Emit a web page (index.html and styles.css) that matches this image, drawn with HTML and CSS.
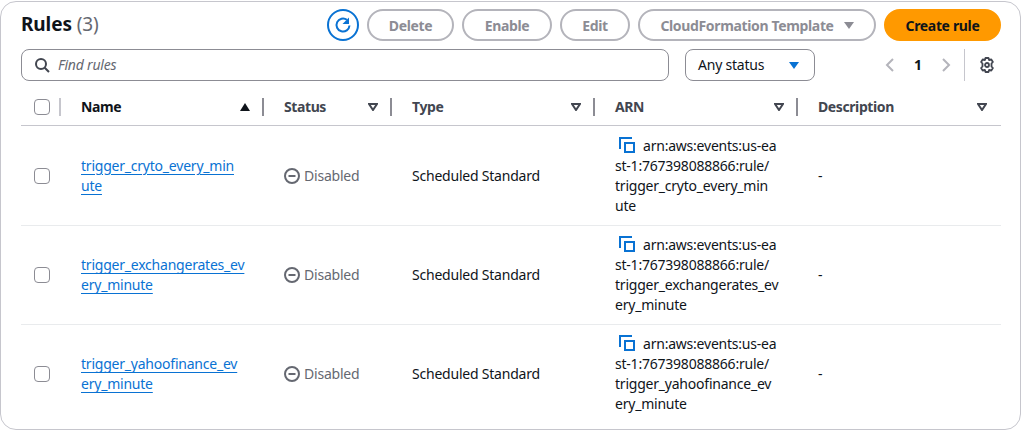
FILE: index.html
```html
<!DOCTYPE html>
<html lang="en">

<head>
    <meta charset="UTF-8">
    <title>Rules</title>
    <link rel="stylesheet" href="styles.css">
</head>

<body>
    <div class="card">

        <!-- title and actions -->
        <div class="top">
            <h2 class="title">Rules <span class="count">(3)</span></h2>
            <div class="actions">
                <button class="refresh">
                    <svg width="18" height="18" viewBox="0 0 18 18" fill="none" stroke="#0972d3" stroke-width="2">
                        <path d="M15.500 9.500a6.500 6.500 0 1 1-2.600-5.700"/>
                        <path d="M15 1.500v6.500h-6.500z" fill="#0972d3" stroke="none"/>
                    </svg>
                </button>
                <button class="btn w-delete">Delete</button>
                <button class="btn w-enable">Enable</button>
                <button class="btn w-edit">Edit</button>
                <button class="btn w-cf">CloudFormation Template <span class="caret-gray"></span></button>
                <button class="btn primary">Create rule</button>
            </div>
        </div>

        <!-- filters -->
        <div class="filters">
            <div class="search">
                <svg width="16" height="16" viewBox="0 0 16 16" fill="none" stroke="#424650" stroke-width="2">
                    <circle cx="7" cy="7" r="5"/>
                    <path d="M10.700 10.700l4.300 4.300"/>
                </svg>
                <span class="placeholder">Find rules</span>
            </div>
            <div class="select">
                <span>Any status</span>
                <span class="caret-blue"></span>
            </div>
            <div class="pager">
                <svg width="16" height="16" viewBox="0 0 16 16" fill="none" stroke="#b4b4bb" stroke-width="2"><path d="M11 2L5 8l6 6"/></svg>
                <span class="page">1</span>
                <svg width="16" height="16" viewBox="0 0 16 16" fill="none" stroke="#b4b4bb" stroke-width="2"><path d="M5 2l6 6-6 6"/></svg>
            </div>
            <div class="settings">
                <svg width="16" height="16" viewBox="0 0 16 16" fill="none" stroke="#424650" stroke-width="1.800" stroke-linejoin="round">
                    <circle cx="8" cy="8" r="2"/>
                    <path d="M6.500 1h3l.6 2 2.200-.5L13.900 5l-1.400 1.500v3L13.900 11l-1.600 2.500-2.200-.5-.6 2h-3l-.6-2-2.200.5L2.100 11l1.400-1.500v-3L2.100 5l1.600-2.500 2.200.5z"/>
                </svg>
            </div>
        </div>

        <!-- table -->
        <div class="row head">
            <div class="cell check"><span class="box"></span><i class="sep"></i></div>
            <div class="cell name-head">Name <svg class="sort" width="10" height="8" viewBox="0 0 10 8"><path d="M5 0l5 8H0z" fill="#0f141a"/></svg><i class="sep"></i></div>
            <div class="cell">Status <svg class="sort" width="10" height="8" viewBox="0 0 10 8"><path d="M1 1h8L5 7z" fill="white" stroke="#424650" stroke-width="2"/></svg><i class="sep"></i></div>
            <div class="cell">Type <svg class="sort" width="10" height="8" viewBox="0 0 10 8"><path d="M1 1h8L5 7z" fill="white" stroke="#424650" stroke-width="2"/></svg><i class="sep"></i></div>
            <div class="cell">ARN <svg class="sort" width="10" height="8" viewBox="0 0 10 8"><path d="M1 1h8L5 7z" fill="white" stroke="#424650" stroke-width="2"/></svg><i class="sep"></i></div>
            <div class="cell">Description <svg class="sort" width="10" height="8" viewBox="0 0 10 8"><path d="M1 1h8L5 7z" fill="white" stroke="#424650" stroke-width="2"/></svg></div>
        </div>

        <div class="row first">
            <div class="cell check"><span class="box"></span></div>
            <div class="cell"><a class="link" href="#">trigger_cryto_every_min<br>ute</a></div>
            <div class="cell"><span class="status"><svg class="minus" width="16" height="16" viewBox="0 0 16 16" fill="none" stroke="#656871" stroke-width="2"><circle cx="8" cy="8" r="7"/><path d="M4.500 8h7"/></svg>Disabled</span></div>
            <div class="cell">Scheduled Standard</div>
            <div class="cell arn">
                <div><svg class="copy" width="16" height="16" viewBox="0 0 16 16" fill="none" stroke="#0972d3" stroke-width="2"><path d="M1 12V1h12"/><rect x="6" y="6" width="9" height="9"/></svg>arn:aws:events:us-ea<br>st-1:767398088866:rule/<br>trigger_cryto_every_min<br>ute</div>
            </div>
            <div class="cell">-</div>
        </div>

        <div class="row">
            <div class="cell check"><span class="box"></span></div>
            <div class="cell"><a class="link" href="#">trigger_exchangerates_ev<br>ery_minute</a></div>
            <div class="cell"><span class="status"><svg class="minus" width="16" height="16" viewBox="0 0 16 16" fill="none" stroke="#656871" stroke-width="2"><circle cx="8" cy="8" r="7"/><path d="M4.500 8h7"/></svg>Disabled</span></div>
            <div class="cell">Scheduled Standard</div>
            <div class="cell arn">
                <div><svg class="copy" width="16" height="16" viewBox="0 0 16 16" fill="none" stroke="#0972d3" stroke-width="2"><path d="M1 12V1h12"/><rect x="6" y="6" width="9" height="9"/></svg>arn:aws:events:us-ea<br>st-1:767398088866:rule/<br>trigger_exchangerates_ev<br>ery_minute</div>
            </div>
            <div class="cell">-</div>
        </div>

        <div class="row last">
            <div class="cell check"><span class="box"></span></div>
            <div class="cell"><a class="link" href="#">trigger_yahoofinance_ev<br>ery_minute</a></div>
            <div class="cell"><span class="status"><svg class="minus" width="16" height="16" viewBox="0 0 16 16" fill="none" stroke="#656871" stroke-width="2"><circle cx="8" cy="8" r="7"/><path d="M4.500 8h7"/></svg>Disabled</span></div>
            <div class="cell">Scheduled Standard</div>
            <div class="cell arn">
                <div><svg class="copy" width="16" height="16" viewBox="0 0 16 16" fill="none" stroke="#0972d3" stroke-width="2"><path d="M1 12V1h12"/><rect x="6" y="6" width="9" height="9"/></svg>arn:aws:events:us-ea<br>st-1:767398088866:rule/<br>trigger_yahoofinance_ev<br>ery_minute</div>
            </div>
            <div class="cell">-</div>
        </div>

    </div>
</body>

</html>
```

FILE: styles.css
```css
* {
    box-sizing: border-box;
}

body {
    margin: 0;
    padding-top: 1px;
    background-color: #ffffff;
    color: #0f141a;
    font-family: "Noto Sans", sans-serif;
    font-size: 14px;
    line-height: 20px;
    letter-spacing: -0.22px;
}

.card {
    width: 1021px;
    height: 429px;
    padding: 7px 19px 0 20px;
    border: 1px solid #c6c6cd;
    border-radius: 16px;
    background-color: white;
}

/* title and actions */
.top {
    display: flex;
    justify-content: space-between;
    align-items: center;
    height: 32px;
}

.title {
    margin: 0;
    font-size: 19px;
    line-height: 32px;
    font-weight: 700;
    letter-spacing: -0.1px;
    position: relative;
    top: -1px;
}

.count {
    color: #656871;
    font-weight: 400;
}

.actions {
    display: flex;
    gap: 8px;
}

button {
    font-family: inherit;
    font-size: 14px;
    font-weight: 700;
    letter-spacing: -0.35px;
    height: 32px;
    padding: 0;
    background-color: white;
    border: 2px solid #b4b4bb;
    border-radius: 16px;
    color: #8c8c94;
    display: flex;
    align-items: center;
    justify-content: center;
    gap: 10px;
}

.refresh {
    width: 32px;
    border-color: #0972d3;
}

.w-delete { width: 87px; }
.w-enable { width: 90px; }
.w-edit { width: 70px; }
.w-cf { width: 238px; }

.primary {
    width: 117px;
    border-color: #ff9900;
    background-color: #ff9900;
    color: #0f141a;
}

.caret-gray, .caret-blue {
    width: 0;
    height: 0;
    border-left: 5px solid transparent;
    border-right: 5px solid transparent;
    border-top: 7px solid #8c8c94;
}

.caret-blue {
    border-top-color: #0972d3;
}

/* filters */
.filters {
    display: flex;
    align-items: center;
    margin-top: 8px;
    height: 32px;
}

.search {
    display: flex;
    align-items: center;
    gap: 8px;
    width: 648px;
    height: 32px;
    padding-left: 12px;
    border: 1px solid #8c8c94;
    border-radius: 8px;
}

.placeholder {
    color: #656871;
    font-style: italic;
}

.select {
    display: flex;
    align-items: center;
    justify-content: space-between;
    width: 130px;
    height: 32px;
    margin-left: 16px;
    padding: 0 15px 0 12px;
    border: 1px solid #8c8c94;
    border-radius: 8px;
}

.pager {
    display: flex;
    align-items: center;
    gap: 16px;
    margin-left: 67px;
}

.page {
    font-weight: 700;
    width: 8px;
    text-align: center;
}

.settings {
    display: flex;
    align-items: center;
    height: 32px;
    margin-left: 10px;
    padding-left: 14px;
    border-left: 1px solid #c6c6cd;
}

/* table */
.row {
    display: grid;
    grid-template-columns: 40px 203px 128px 203px 203px 203px;
    height: 99px;
    border-bottom: 1px solid #e9ebed;
}

.row.first {
    height: 100px;
}

.row.last {
    height: 98px;
    border-bottom: 0;
}

.row.head {
    height: 36px;
    margin-top: 9px;
    padding: 0 0 2px;
    border-bottom: 1px solid #c6c6cd;
    font-weight: 700;
    letter-spacing: -0.4px;
    color: #424650;
}

.cell {
    display: flex;
    align-items: center;
    position: relative;
    padding-left: 20px;
    white-space: nowrap;
}

.head .cell {
    justify-content: space-between;
    padding-right: 14px;
}

.head .name-head {
    color: #0f141a;
}

.cell.check {
    padding: 0 0 0 13px;
}

.box {
    display: block;
    width: 16px;
    height: 16px;
    border: 1px solid #8c8c94;
    border-radius: 4px;
}

.sep {
    position: absolute;
    right: 0;
    top: 8px;
    width: 2px;
    height: 18px;
    background-color: #8c8c94;
}

.check .sep {
    background-color: #c6c6cd;
}

.link {
    color: #0972d3;
    text-decoration: underline;
    text-underline-offset: 3px;
}

.status {
    display: flex;
    align-items: center;
    gap: 4px;
    color: #656871;
}

.copy {
    margin: 0 8px 0 4px;
    vertical-align: -2px;
}
```
